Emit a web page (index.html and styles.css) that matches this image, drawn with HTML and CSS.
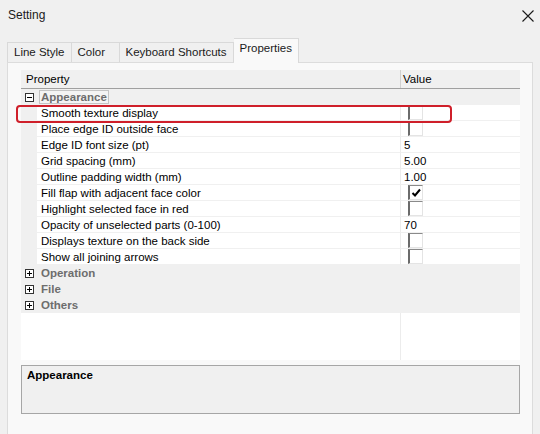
FILE: index.html
```html
<!DOCTYPE html>
<html lang="en">
<head>
    <meta charset="UTF-8">
    <title>Setting</title>
    <link rel="stylesheet" href="styles.css">
</head>
<body>
<div class="window">
    <div class="titlebar">
        <span class="title">Setting</span>
        <svg class="close" width="12" height="12" viewBox="0 0 12 12">
            <path d="M0.5 0.5 L11.5 11.5 M11.5 0.5 L0.5 11.5" stroke="#1a1a1a" stroke-width="1.1" fill="none"/>
        </svg>
    </div>

    <div class="tabs">
        <div class="tab">Line Style</div>
        <div class="tab">Color</div>
        <div class="tab">Keyboard Shortcuts</div>
        <div class="tab active">Properties</div>
    </div>

    <div class="panel">
        <div class="grid">
            <div class="grid-head">
                <div class="head-prop">Property</div>
                <div class="head-val">Value</div>
            </div>

            <div class="row cat">
                <span class="expander minus"></span>
                <span class="cat-label selected">Appearance</span>
            </div>
            <div class="row prop marked">
                <div class="gutter"></div>
                <div class="name">Smooth texture display</div>
                <div class="val"><span class="check"></span></div>
                <div class="mark"></div>
            </div>
            <div class="row prop">
                <div class="gutter"></div>
                <div class="name">Place edge ID outside face</div>
                <div class="val"><span class="check"></span></div>
            </div>
            <div class="row prop">
                <div class="gutter"></div>
                <div class="name">Edge ID font size (pt)</div>
                <div class="val">5</div>
            </div>
            <div class="row prop">
                <div class="gutter"></div>
                <div class="name">Grid spacing (mm)</div>
                <div class="val">5.00</div>
            </div>
            <div class="row prop">
                <div class="gutter"></div>
                <div class="name">Outline padding width (mm)</div>
                <div class="val">1.00</div>
            </div>
            <div class="row prop">
                <div class="gutter"></div>
                <div class="name">Fill flap with adjacent face color</div>
                <div class="val"><span class="check on">
                    <svg width="11" height="10" viewBox="0 0 11 10"><path d="M1.5 5 L4 7.5 L9 1.5" stroke="#000" stroke-width="2" fill="none"/></svg>
                </span></div>
            </div>
            <div class="row prop">
                <div class="gutter"></div>
                <div class="name">Highlight selected face in red</div>
                <div class="val"><span class="check"></span></div>
            </div>
            <div class="row prop">
                <div class="gutter"></div>
                <div class="name">Opacity of unselected parts (0-100)</div>
                <div class="val">70</div>
            </div>
            <div class="row prop">
                <div class="gutter"></div>
                <div class="name">Displays texture on the back side</div>
                <div class="val"><span class="check"></span></div>
            </div>
            <div class="row prop">
                <div class="gutter"></div>
                <div class="name">Show all joining arrows</div>
                <div class="val"><span class="check"></span></div>
            </div>

            <div class="row cat">
                <span class="expander plus"></span>
                <span class="cat-label">Operation</span>
            </div>
            <div class="row cat">
                <span class="expander plus"></span>
                <span class="cat-label">File</span>
            </div>
            <div class="row cat">
                <span class="expander plus"></span>
                <span class="cat-label">Others</span>
            </div>

            <div class="grid-empty">
                <div class="empty-prop"></div>
                <div class="empty-val"></div>
            </div>
        </div>

        <div class="desc">
            <b>Appearance</b>
        </div>
    </div>
</div>
</body>
</html>
```

FILE: styles.css
```css
* {
    box-sizing: border-box;
}
body {
    margin: 0;
    background: #f0f0f0;
    font-family: "Liberation Sans", Arial, sans-serif;
    font-size: 12px;
    color: #000;
}
.window {
    width: 540px;
    height: 434px;
    overflow: hidden;
}
.titlebar {
    height: 30px;
    display: flex;
    align-items: center;
    justify-content: space-between;
    padding: 0 6px 0 8px;
}
.title {
    font-size: 12px;
    color: #1a1a1a;
}
.close {
    margin-top: 1px;
}

/* tabs */
.tabs {
    height: 32px;
    display: flex;
    align-items: flex-end;
    padding-left: 7px;
    font-size: 11.5px;
}
.tab {
    height: 20px;
    line-height: 19px;
    padding: 0 6px;
    min-width: 48px;
    border: 1px solid #d9d9d9;
    border-bottom: none;
    border-left: none;
    background: #f0f0f0;
    color: #1a1a1a;
}
.tab:first-child {
    border-left: 1px solid #d9d9d9;
}
.tab.active {
    height: 25px;
    line-height: 19px;
    margin-bottom: -1px;
    background: #f9f9f9;
    position: relative;
    z-index: 1;
}

/* panel */
.panel {
    margin: 0 7px;
    height: 380px;
    border: 1px solid #dcdcdc;
    background: #f9f9f9;
    padding: 7px 12px 0 13px;
}
.grid {
    height: 290px;
    background: #fff;
    display: flex;
    flex-direction: column;
    font-size: 11.5px;
}
.grid-head {
    height: 19px;
    display: flex;
    background: #f0f0f0;
    border-bottom: 1px solid #a0a0a0;
    line-height: 18px;
}
.head-prop {
    width: 380px;
    padding-left: 5px;
    border-right: 1px solid #d0d0d0;
}
.head-val {
    padding-left: 2px;
}

.row {
    height: 16px;
    display: flex;
    line-height: 16px;
}
.row.cat {
    background: #f0f0f0;
    align-items: center;
}
.expander {
    width: 9px;
    height: 9px;
    margin: 0 5px 0 4px;
    border: 1px solid #333;
    position: relative;
    background: #fff;
}
.expander::before,
.expander.plus::after {
    content: "";
    position: absolute;
    background: #000;
}
.expander::before {
    left: 1px;
    top: 3px;
    width: 5px;
    height: 1px;
}
.expander.plus::after {
    left: 3px;
    top: 1px;
    width: 1px;
    height: 5px;
}
.cat-label {
    font-weight: bold;
    color: #6d6d6d;
    padding: 0 1px;
    border: 1px solid transparent;
    line-height: 12px;
}
.cat-label.selected {
    border-color: #c4c4c4;
    background: #f4f4f4;
}

.row.prop .gutter {
    width: 16px;
    background: #f0f0f0;
}
.row.prop .name {
    width: 364px;
    padding-left: 4px;
    border-bottom: 1px solid #f0f0f0;
    border-right: 1px solid #ececec;
}
.row.prop .val {
    flex: 1;
    padding-left: 3px;
    border-bottom: 1px solid #f0f0f0;
}
.check {
    display: block;
    width: 15px;
    height: 15px;
    margin-left: 4px;
    border-left: 2px solid #6b6b6b;
    border-top: 1px solid #8a8a8a;
    border-right: 1px solid #e4e4e4;
    border-bottom: 1px solid #e4e4e4;
    background: #fff;
}
.check svg {
    display: block;
    margin: 2px 0 0 1px;
}

/* red annotation round the first property */
.row.marked {
    position: relative;
}
.mark {
    position: absolute;
    left: -5px;
    top: 0;
    width: 436px;
    height: 18px;
    border: 2px solid #cf1f2a;
    border-radius: 4px;
}

.grid-empty {
    flex: 1;
    display: flex;
}
.empty-prop {
    width: 380px;
    border-right: 1px solid #ececec;
}

.desc {
    margin-top: 5px;
    height: 49px;
    border: 1px solid #a6a6a6;
    background: #f0f0f0;
    padding: 3px 5px;
    font-size: 11.5px;
}
```
